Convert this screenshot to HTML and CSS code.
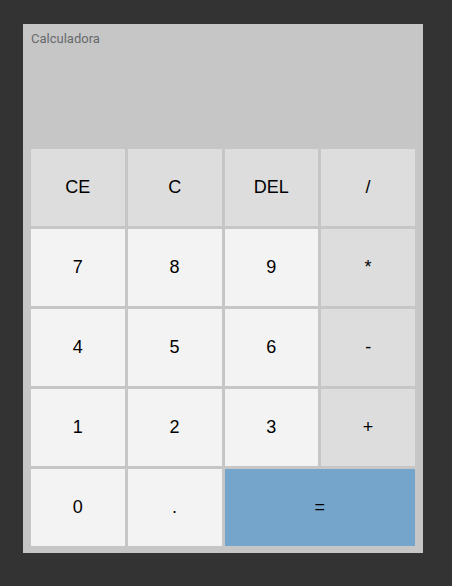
FILE: index.html
```html
<!DOCTYPE html>
<html>
<head>
<meta charset="utf-8">
<link rel="stylesheet" href="styles.css">
</head>
<body>
<div class="calc">
  <div class="display"><span class="title">Calculadora</span></div>
  <div class="keys">
    <button class="key op">CE</button>
    <button class="key op">C</button>
    <button class="key op">DEL</button>
    <button class="key op">/</button>
    <button class="key">7</button>
    <button class="key">8</button>
    <button class="key">9</button>
    <button class="key op">*</button>
    <button class="key">4</button>
    <button class="key">5</button>
    <button class="key">6</button>
    <button class="key op">-</button>
    <button class="key">1</button>
    <button class="key">2</button>
    <button class="key">3</button>
    <button class="key op">+</button>
    <button class="key">0</button>
    <button class="key">.</button>
    <button class="key eq">=</button>
  </div>
</div>
</body>
</html>
```
FILE: styles.css
```css
html, body {
  margin: 0;
  padding: 0;
  background: #333333;
}
body {
  padding: 24px 0 0 23px;
}
.calc {
  width: 400px;
  height: 529px;
  box-sizing: border-box;
  background: #c6c6c6;
  padding: 0 8px;
  display: flex;
  flex-direction: column;
}
.display {
  height: 125px;
  box-sizing: border-box;
  padding-top: 7px;
}
.title {
  font-family: Roboto, "Liberation Sans", sans-serif;
  font-size: 13px;
  color: #666a6e;
  display: block;
  line-height: 16px;
}
.keys {
  display: grid;
  grid-template-columns: repeat(4, 1fr);
  grid-template-rows: repeat(5, 77px);
  gap: 3px;
}
.key {
  border: none;
  margin: 0;
  padding: 0;
  background: #f3f3f3;
  font-family: "Liberation Sans", Arial, sans-serif;
  font-size: 18px;
  color: #000;
}
.key.op {
  background: #dcdddc;
}
.key.eq {
  grid-column: span 2;
  background: #75a5cb;
}
```
